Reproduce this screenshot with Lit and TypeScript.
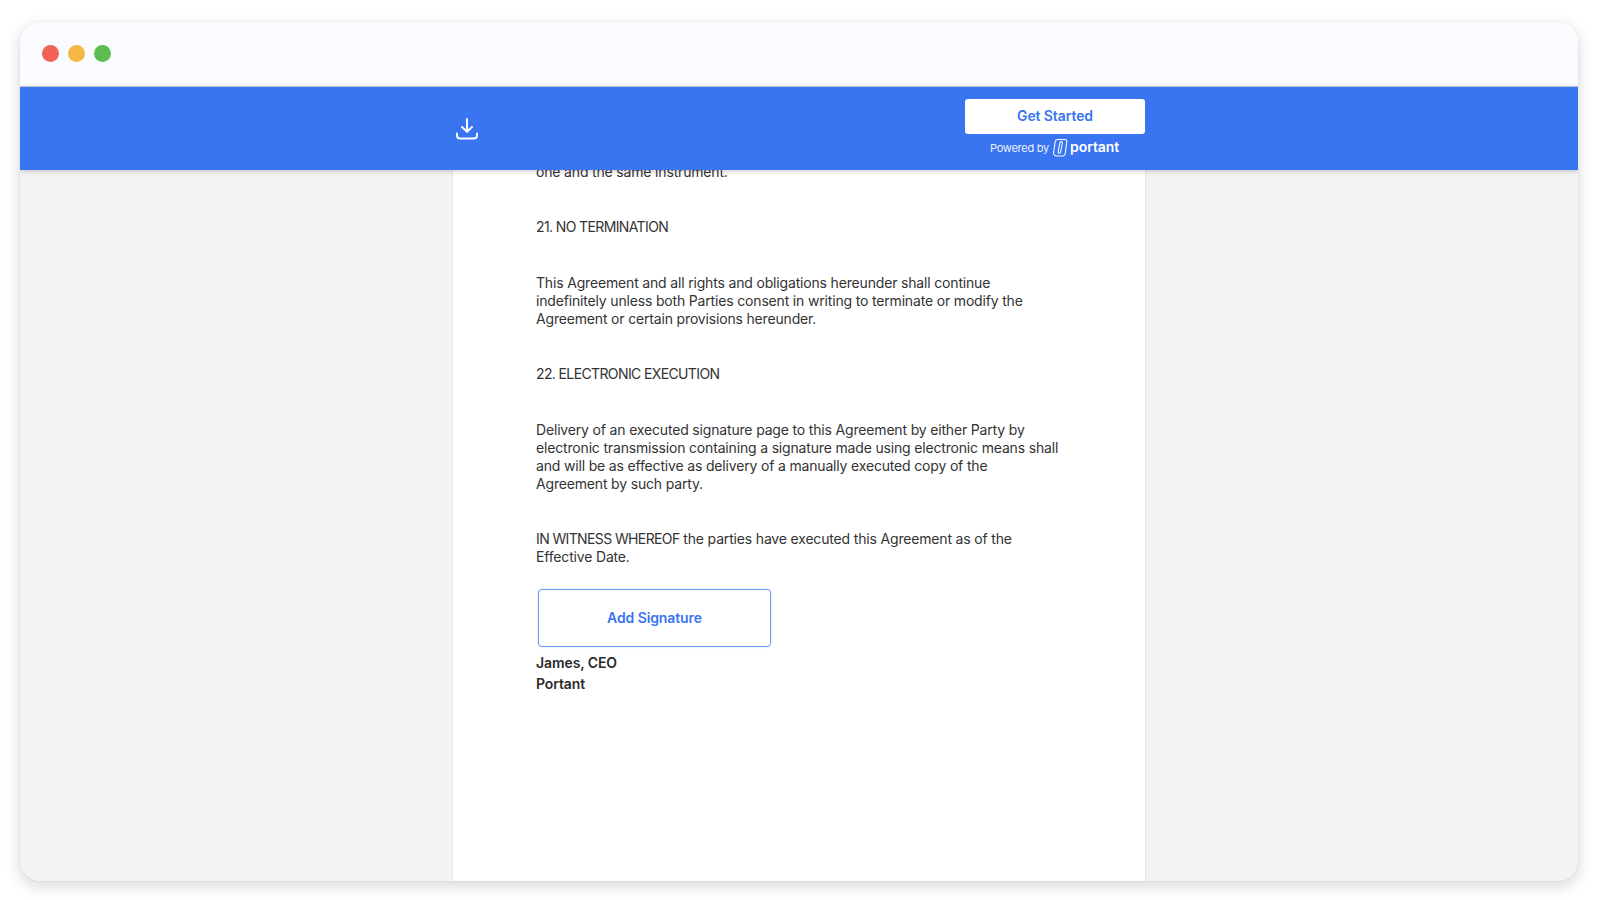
import { LitElement, html, css } from "lit";
import { customElement } from "lit/decorators.js";

@customElement("app-root")
export class AppRoot extends LitElement {
  static styles = css`
    :host { display: block; width: 1600px; height: 900px; background: #fff; overflow: hidden; font-family: "Inter", "Liberation Sans", sans-serif; }
    .page { padding: 22px 22px 19px 20px; height: 900px; box-sizing: border-box; }
    .window { height: 859px; border-radius: 20px; overflow: hidden; display: flex; flex-direction: column; background: #f3f3f3; box-shadow: 0 5px 16px rgba(0,0,0,.16), 0 0 3px rgba(0,0,0,.06); }
    .titlebar { flex: none; background: #fafbff; border-bottom: 1px solid #c9cdd4; display: flex; align-items: center; gap: 9px; padding-left: 22px; padding-bottom: 2px; box-sizing: border-box; height: 65px; }
    .dot { width: 17px; height: 17px; border-radius: 50%; }
    .red { background: #f16259; } .yellow { background: #f6b844; } .green { background: #5cbd50; }
    .bar { flex: none; height: 83px; background: #3974f1; padding-left: 432px; position: relative; z-index: 1; box-shadow: 0 1px 5px rgba(0,0,0,.22); }
    .bar-inner { width: 694px; height: 100%; display: flex; justify-content: space-between; }
    .dl { display: flex; align-items: center; padding-left: 2.5px; }
    .dl svg { display: block; }
    .cta { display: flex; flex-direction: column; align-items: flex-end; padding-top: 12px; padding-right: 1px; box-sizing: border-box; }
    .btn { width: 180px; height: 35px; background: #fff; border-radius: 3px; color: #3974f1; font-size: 14px; font-weight: 600; display: flex; align-items: center; justify-content: center; box-sizing: border-box; padding-bottom: 2px; letter-spacing: -.1px; }
    .powered { width: 180px; margin-top: 5px; display: flex; align-items: center; padding-left: 25px; box-sizing: border-box; color: #fff; gap: 4px; }
    .powered .by { font-size: 11px; opacity: .9; letter-spacing: -.25px; }
    .powered .name { font-size: 14px; font-weight: 600; letter-spacing: -.05px; margin-left: -2px; margin-top: -3px; }
    .main { flex: 1; min-height: 0; padding-left: 432px; }
    .doc { width: 694px; height: 100%; background: #fff; border-left: 1px solid #e8e8e8; border-right: 1px solid #e8e8e8; box-sizing: border-box; overflow: hidden; padding: 0 60px 0 83px; color: #333; font-size: 14px; line-height: 18px; letter-spacing: -.17px; }
    .flow { margin-top: -7.25px; }
    p { margin: 0 0 37.5px; white-space: nowrap; }
    .caps { letter-spacing: -.62px; }
    .sig { width: 233px; height: 58px; border: 1.5px solid #6f97ee; border-radius: 4px; margin: -14.5px 0 0 2px; box-sizing: border-box; display: flex; align-items: center; justify-content: center; color: #3974f1; font-size: 14px; font-weight: 600; letter-spacing: -.1px; box-shadow: 0 0 2px rgba(58,117,242,.3); }
    .who { margin-top: 5px; font-weight: 600; line-height: 21px; color: #2b2b2b; letter-spacing: -.1px; }
  `;

  render() {
    return html`
      <div class="page">
        <div class="window">
          <div class="titlebar">
            <div class="dot red"></div>
            <div class="dot yellow"></div>
            <div class="dot green"></div>
          </div>
          <div class="bar">
            <div class="bar-inner">
              <div class="dl">
                <svg width="24" height="24" viewBox="0 0 24 24" fill="none" stroke="#fff" stroke-width="1.9" stroke-linecap="round" stroke-linejoin="round">
                  <path d="M12 2v12.5"/>
                  <path d="M7 10 12 14.800l5-4.800"/>
                  <path d="M2 16.500v2a3 3 0 0 0 3 3h14a3 3 0 0 0 3-3v-2"/>
                </svg>
              </div>
              <div class="cta">
                <div class="btn">Get Started</div>
                <div class="powered">
                  <span class="by">Powered by</span>
                  <svg width="15" height="18" viewBox="1.500 .5 14 17" fill="none" stroke="#fff" stroke-width="1" stroke-linejoin="round">
                    <path d="M3.500 3 2 13c-.2 1.500.6 3 2 3.500h6.500c1.500 0 2.300-1 2.500-2.500L14.500 3c.2-1.200-.6-2-1.800-2H5.500C4.300 1 3.700 1.800 3.500 3Z"/>
                    <path d="M7.800 4.500 6.300 12.500c-.2 1 .3 1.500 1 1.500s1.200-.5 1.400-1.500l1.500-8c.2-1-.3-1.500-1-1.500s-1.200.5-1.400 1.500Z"/>
                  </svg>
                  <span class="name">portant</span>
                </div>
              </div>
            </div>
          </div>
          <div class="main">
            <div class="doc">
              <div class="flow">
                <p>one and the same instrument.</p>
                <p class="caps">21. NO TERMINATION</p>
                <p>This Agreement and all rights and obligations hereunder shall continue<br>indefinitely unless both Parties consent in writing to terminate or modify the<br>Agreement or certain provisions hereunder.</p>
                <p class="caps">22. ELECTRONIC EXECUTION</p>
                <p>Delivery of an executed signature page to this Agreement by either Party by<br>electronic transmission containing a signature made using electronic means shall<br>and will be as effective as delivery of a manually executed copy of the<br>Agreement by such party.</p>
                <p><span class="caps">IN WITNESS WHEREOF</span> the parties have executed this Agreement as of the<br>Effective Date.</p>
                <div class="sig">Add Signature</div>
                <div class="who">James, CEO<br>Portant</div>
              </div>
            </div>
          </div>
        </div>
      </div>
    `;
  }
}
